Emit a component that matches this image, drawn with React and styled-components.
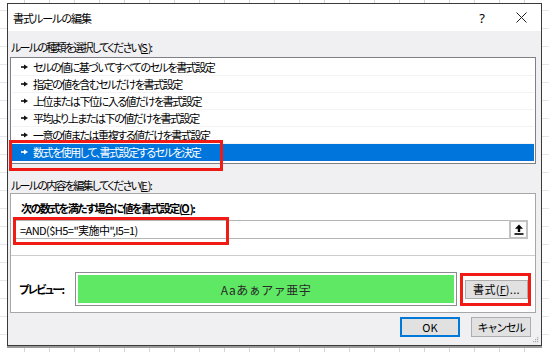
import React from "react";
import styled, { createGlobalStyle } from "styled-components";

const GlobalStyle = createGlobalStyle`
  html, body {
    margin: 0;
    padding: 0;
    background: #ffffff;
  }
  body {
    font-family: "Noto Sans CJK JP", "Noto Sans", sans-serif;
    color: #000;
    font-feature-settings: "palt";
  }
`;

const rules = [
  "セルの値に基づいてすべてのセルを書式設定",
  "指定の値を含むセルだけを書式設定",
  "上位または下位に入る値だけを書式設定",
  "平均より上または下の値だけを書式設定",
  "一意の値または重複する値だけを書式設定",
  "数式を使用して、書式設定するセルを決定",
];

const Page = styled.div`
  width: 549px;
  height: 352px;
  box-sizing: border-box;
  padding: 3px 0 0 7px;
  overflow: hidden;
  background-color: #fff;
  background-image:
    repeating-linear-gradient(90deg, transparent 0 24px, #d6d6d6 24px 25px),
    repeating-linear-gradient(0deg, transparent 0 17px, #e6e6e6 17px 18px);
`;

const Dialog = styled.div`
  position: relative;
  width: 535px;
  height: 343px;
  box-sizing: border-box;
  border: 1px solid #3a3a3a;
  box-shadow: 0 2px 0 #9a9a9a;
  display: flex;
  flex-direction: column;
  background: #f0eff2;
`;

const TitleBar = styled.div`
  height: 27px;
  background: #fff;
  display: flex;
  align-items: center;
  padding-left: 5px;
  font-size: 11px;
  letter-spacing: -1px;
`;

const TitleText = styled.span`
  flex: 1;
`;

const TitleBtn = styled.span`
  width: ${({ $w }) => $w}px;
  margin-right: ${({ $mr }) => $mr}px;
  display: flex;
  justify-content: center;
  align-items: center;
  font-size: 13px;
  letter-spacing: 0;
  font-family: "Noto Sans", sans-serif;
`;

const Body = styled.div`
  flex: 1;
  display: flex;
  flex-direction: column;
  padding: 0 5px 0 2px;
`;

const Label = styled.div`
  height: 14px;
  line-height: 14px;
  font-size: 11px;
  letter-spacing: ${({ $bold }) => ($bold ? "-1.55px" : "-1.7px")};
  margin: ${({ $m }) => $m};
  padding-left: 1px;
  white-space: nowrap;
  font-weight: ${({ $bold }) => ($bold ? 700 : 400)};
`;

const U = styled.span`
  text-decoration: underline;
  text-underline-offset: 1px;
  letter-spacing: 0;
`;

const List = styled.div`
  margin-top: 3px;
  height: 107px;
  box-sizing: border-box;
  border: 1px solid #7f7f86;
  background: #fff;
  padding: 1px 1px 0;
  overflow: hidden;
`;

const Row = styled.div`
  height: 17px;
  display: flex;
  align-items: center;
  gap: 5px;
  padding-left: 9px;
  font-size: 11px;
  letter-spacing: -1.45px;
  white-space: nowrap;
  border-bottom: 1px solid ${({ $sel }) => ($sel ? "#0a6fd6" : "#f3f3f5")};
  box-sizing: border-box;
  background: ${({ $sel }) => ($sel ? "#0075db" : "transparent")};
  color: ${({ $sel }) => ($sel ? "#fff" : "#000")};
`;

const Panel = styled.div`
  margin-top: 1px;
  height: 120px;
  box-sizing: border-box;
  border: 1px solid #a7a7a7;
  background: #fff;
  display: flex;
  flex-direction: column;
  padding: 0 7px 0 3px;
`;

const FormulaRow = styled.div`
  margin-top: 5px;
  height: 19px;
  box-sizing: border-box;
  border: 1px solid #b5b5b5;
  display: flex;
  align-items: center;
  padding-left: 5px;
`;

const FormulaText = styled.span`
  flex: 1;
  font-size: 11px;
  letter-spacing: -0.55px;
`;

const PickBtn = styled.span`
  width: 19px;
  height: 19px;
  box-sizing: border-box;
  border: 2px solid #c2c2c2;
  background: #fbfbfb;
  display: flex;
  align-items: center;
  justify-content: center;
  margin-right: -1px;
`;

const Separator = styled.div`
  margin: 16px -7px 0 -3px;
  height: 1px;
  background: #cdcdcd;
`;

const PreviewRow = styled.div`
  display: flex;
  align-items: center;
  margin-top: 16px;
  padding-left: 5px;
`;

const PreviewLabel = styled.span`
  width: 56px;
  font-size: 11px;
  font-weight: 700;
  letter-spacing: -1.6px;
`;

const PreviewBox = styled.div`
  width: 382px;
  height: 34px;
  box-sizing: border-box;
  border: 1px solid #8c8c8c;
  padding: 2px;
  background: #fff;
`;

const PreviewFill = styled.div`
  height: 100%;
  background: #5ee864;
  display: flex;
  align-items: center;
  justify-content: center;
  font-size: 12px;
  color: #2a2a2a;
  font-feature-settings: normal;
  letter-spacing: 0.5px;
`;

const Button = styled.button`
  width: ${({ $w }) => $w}px;
  height: ${({ $h }) => $h}px;
  box-sizing: border-box;
  padding: 0;
  background: #e1e1e1;
  border: ${({ $primary }) => ($primary ? "2px solid #0078d7" : "1px solid #adadad")};
  font-family: inherit;
  font-size: 11px;
  letter-spacing: ${({ $ls }) => $ls}px;
  color: #000;
  display: flex;
  align-items: center;
  justify-content: center;
`;

const FormatButton = styled(Button)`
  margin-left: 8px;
`;

const Footer = styled.div`
  display: flex;
  justify-content: flex-end;
  gap: 11px;
  margin-top: 4px;
  padding-right: 5px;
`;

const Mark = styled.div`
  position: absolute;
  left: ${({ $x }) => $x}px;
  top: ${({ $y }) => $y}px;
  width: ${({ $w }) => $w}px;
  height: ${({ $h }) => $h}px;
  box-sizing: border-box;
  border: 3px solid #f01b14;
  pointer-events: none;
`;

const Grip = styled.svg`
  position: absolute;
  right: 2px;
  bottom: 2px;
`;

const Bullet = ({ color }) => (
  <svg width="7" height="6" viewBox="0 0 7 6">
    <rect x="0" y="2.2" width="4" height="1.6" fill={color} />
    <path d="M3 0.5 L7 3 L3 5.5 Z" fill={color} />
  </svg>
);

const App = () => {
  return (
    <>
      <GlobalStyle />
      <Page>
        <Dialog>
          <TitleBar>
            <TitleText>書式ルールの編集</TitleText>
            <TitleBtn $w={28} $mr={7}>?</TitleBtn>
            <TitleBtn $w={36} $mr={2}>
              <svg width="11" height="11" viewBox="0 0 11 11">
                <path d="M0.5 0.5 L10.5 10.5 M10.5 0.5 L0.5 10.5" stroke="#222" strokeWidth="1" />
              </svg>
            </TitleBtn>
          </TitleBar>
          <Body>
            <Label $m="9px 0 0 0">
              ルールの種類を選択してください(<U>S</U>):
            </Label>
            <List>
              {rules.map((r, i) => {
                const sel = i === rules.length - 1;
                return (
                  <Row key={r} $sel={sel}>
                    <Bullet color={sel ? "#fff" : "#111"} />
                    {r}
                  </Row>
                );
              })}
            </List>
            <Label $m="14px 0 0 0">
              ルールの内容を編集してください(<U>E</U>):
            </Label>
            <Panel>
              <Label $m="7px 0 0 6px" $bold>
                次の数式を満たす場合に値を書式設定(<U>O</U>):
              </Label>
              <FormulaRow>
                <FormulaText>=AND($H5="実施中",I5=1)</FormulaText>
                <PickBtn>
                  <svg width="10" height="11" viewBox="0 0 10 11">
                    <path d="M5 0.5 L9 4.8 L6.2 4.8 L6.2 8 L3.8 8 L3.8 4.8 L1 4.8 Z" fill="#000" />
                    <rect x="0.5" y="9.2" width="9" height="1.6" fill="#000" />
                  </svg>
                </PickBtn>
              </FormulaRow>
              <Separator />
              <PreviewRow>
                <PreviewLabel>プレビュー:</PreviewLabel>
                <PreviewBox>
                  <PreviewFill>Aaあぁアァ亜宇</PreviewFill>
                </PreviewBox>
                <FormatButton $w={63} $h={19} $ls={0.3}>
                  書式(<U>F</U>)...
                </FormatButton>
              </PreviewRow>
            </Panel>
            <Footer>
              <Button $w={60} $h={20} $ls={0} $primary>
                OK
              </Button>
              <Button $w={60} $h={20} $ls={-1.6}>
                キャンセル
              </Button>
            </Footer>
          </Body>
          <Mark $x={1} $y={136} $w={214} $h={31} />
          <Mark $x={5} $y={213} $w={216} $h={28} />
          <Mark $x={452} $y={269} $w={71} $h={33} />
          <Grip width="6" height="6" viewBox="0 0 6 6">
            <rect x="4" y="0" width="1.2" height="1.2" fill="#aaa" />
            <rect x="2" y="2" width="1.2" height="1.2" fill="#aaa" />
            <rect x="4" y="2" width="1.2" height="1.2" fill="#aaa" />
            <rect x="0" y="4" width="1.2" height="1.2" fill="#aaa" />
            <rect x="2" y="4" width="1.2" height="1.2" fill="#aaa" />
            <rect x="4" y="4" width="1.2" height="1.2" fill="#aaa" />
          </Grip>
        </Dialog>
      </Page>
    </>
  );
};

export default App;
